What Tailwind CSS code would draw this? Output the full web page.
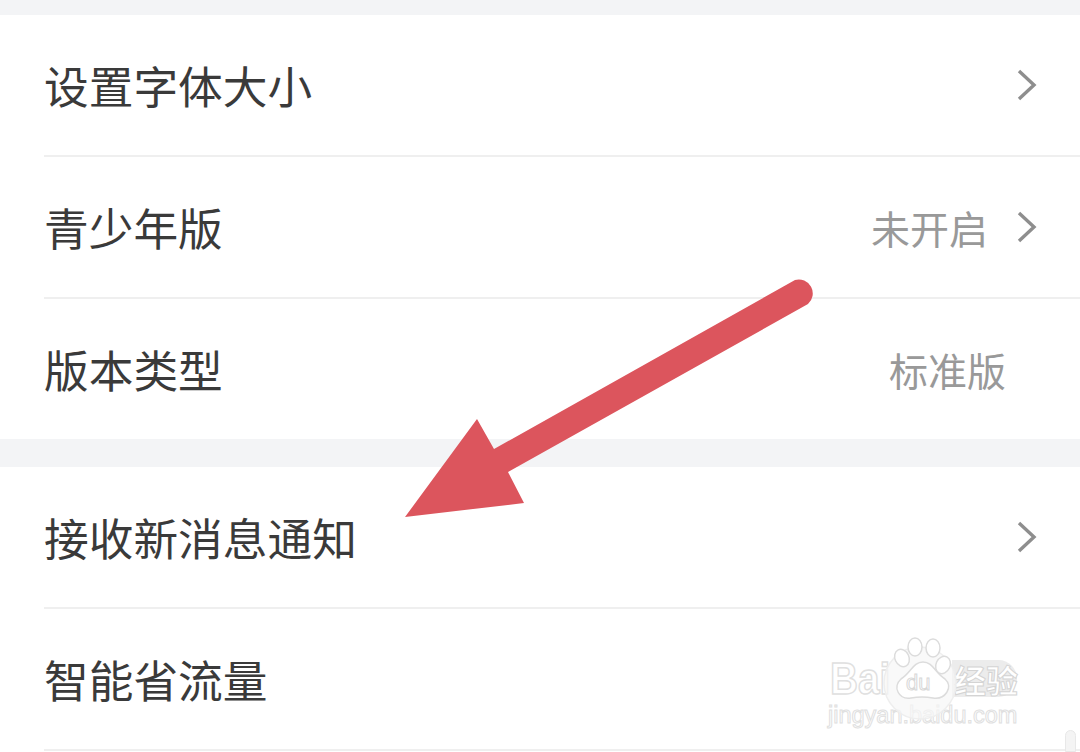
<!DOCTYPE html>
<html lang="zh-CN">
<head>
    <meta charset="UTF-8">
    <title>设置</title>
    <script src="https://cdn.jsdelivr.net/npm/@tailwindcss/browser@4"></script>
</head>
<body class="w-[1080px] h-[752px] overflow-hidden bg-white relative font-['Noto_Sans_CJK_SC','Noto_Sans',sans-serif] text-[#3a3a3a]">
    <div class="h-[15px] bg-[#f3f4f6]"></div>

    <!-- first group -->
    <div class="pl-[44px]">
        <div class="h-[142px] flex items-center justify-between border-b-2 border-[#efefef] pr-[43px]">
            <span class="text-[44.7px] leading-none">设置字体大小</span>
            <svg class="w-[20px] h-[32px]" viewBox="0 0 20 32" fill="none" stroke="#8e8e8e" stroke-width="3.4"><path d="M2 2l15 14L2 30"/></svg>
        </div>
        <div class="h-[142px] flex items-center justify-between border-b-2 border-[#efefef] pr-[43px]">
            <span class="text-[44.7px] leading-none">青少年版</span>
            <div class="flex items-center gap-[29px]">
                <span class="text-[39px] leading-none text-[#999]">未开启</span>
                <svg class="w-[20px] h-[32px]" viewBox="0 0 20 32" fill="none" stroke="#8e8e8e" stroke-width="3.4"><path d="M2 2l15 14L2 30"/></svg>
            </div>
        </div>
        <div class="h-[140px] flex items-center justify-between pr-[74px]">
            <span class="text-[44.7px] leading-none">版本类型</span>
            <span class="text-[39px] leading-none text-[#999]">标准版</span>
        </div>
    </div>

    <div class="h-[28px] bg-[#f3f4f6]"></div>

    <!-- second group -->
    <div class="pl-[44px]">
        <div class="h-[142px] flex items-center justify-between border-b-2 border-[#efefef] pr-[43px]">
            <span class="text-[44.7px] leading-none">接收新消息通知</span>
            <svg class="w-[20px] h-[32px]" viewBox="0 0 20 32" fill="none" stroke="#8e8e8e" stroke-width="3.4"><path d="M2 2l15 14L2 30"/></svg>
        </div>
        <div class="h-[142px] flex items-center border-b-2 border-[#efefef]">
            <span class="text-[44.7px] leading-none">智能省流量</span>
        </div>
    </div>

    <!-- red arrow drawn over the screenshot -->
    <svg class="absolute left-0 top-0 w-[1080px] h-[752px]" viewBox="0 0 1080 752">
        <path fill="#dc555d" d="M405 517L477 419L494 449L795 280A14 14 0 0 1 808 304L508 472L524 503Z"/>
    </svg>

    <!-- baidu jingyan watermark -->
    <div class="absolute left-[828px] top-[634px] w-[200px] h-[100px] text-transparent [-webkit-text-stroke:1.5px_#e0e0e0]">
        <span class="absolute left-[2px] top-[23px] text-[44px] leading-none font-bold font-['Liberation_Sans',sans-serif] origin-left scale-x-[.88]">Bai</span>
        <span class="absolute left-[124px] top-[26px] w-[65px] h-[37px] rounded-r-full bg-[#ececec]"></span>
        <span class="absolute left-[126px] top-[29px] text-[32px] leading-none font-bold text-white [-webkit-text-stroke:1px_#d4d4d4]">经验</span>
        <span class="absolute left-0 top-[70px] text-[23.5px] leading-none font-['Liberation_Sans',sans-serif] [-webkit-text-stroke:1px_#e0e0e0]">jingyan.baidu.com</span>
        <svg class="absolute left-[55px] top-[3px] w-[74px] h-[84px]" viewBox="0 0 74 84" fill="#fff" stroke="#dcdcdc" stroke-width="1.500">
            <circle cx="37" cy="46" r="36" fill="#f7f7f7" fill-opacity="0.7" stroke="#eeeeee"/>
            <ellipse cx="19" cy="21" rx="7" ry="9" transform="rotate(-25 19 21)"/>
            <ellipse cx="32" cy="10" rx="7" ry="9"/>
            <ellipse cx="50" cy="11" rx="7" ry="9"/>
            <ellipse cx="60" cy="28" rx="7" ry="9" transform="rotate(25 60 28)"/>
            <path d="M40 25C50 25 52 36 62 42C71 50 62 63 50 61C44 60 34 60 28 61C16 63 9 50 18 42C28 36 30 25 40 25Z"/>
        </svg>
        <span class="absolute left-[78px] top-[38px] text-[22px] leading-none font-['Liberation_Sans',sans-serif] [-webkit-text-stroke:1px_#d8d8d8]">du</span>
    </div>

    <!-- scroll handle in the corner -->
    <div class="absolute left-[1065px] top-[730px] w-[11px] h-[22px] rounded-t-full border border-[#e8e8e8] bg-[#f4f4f4]"></div>
</body>
</html>
